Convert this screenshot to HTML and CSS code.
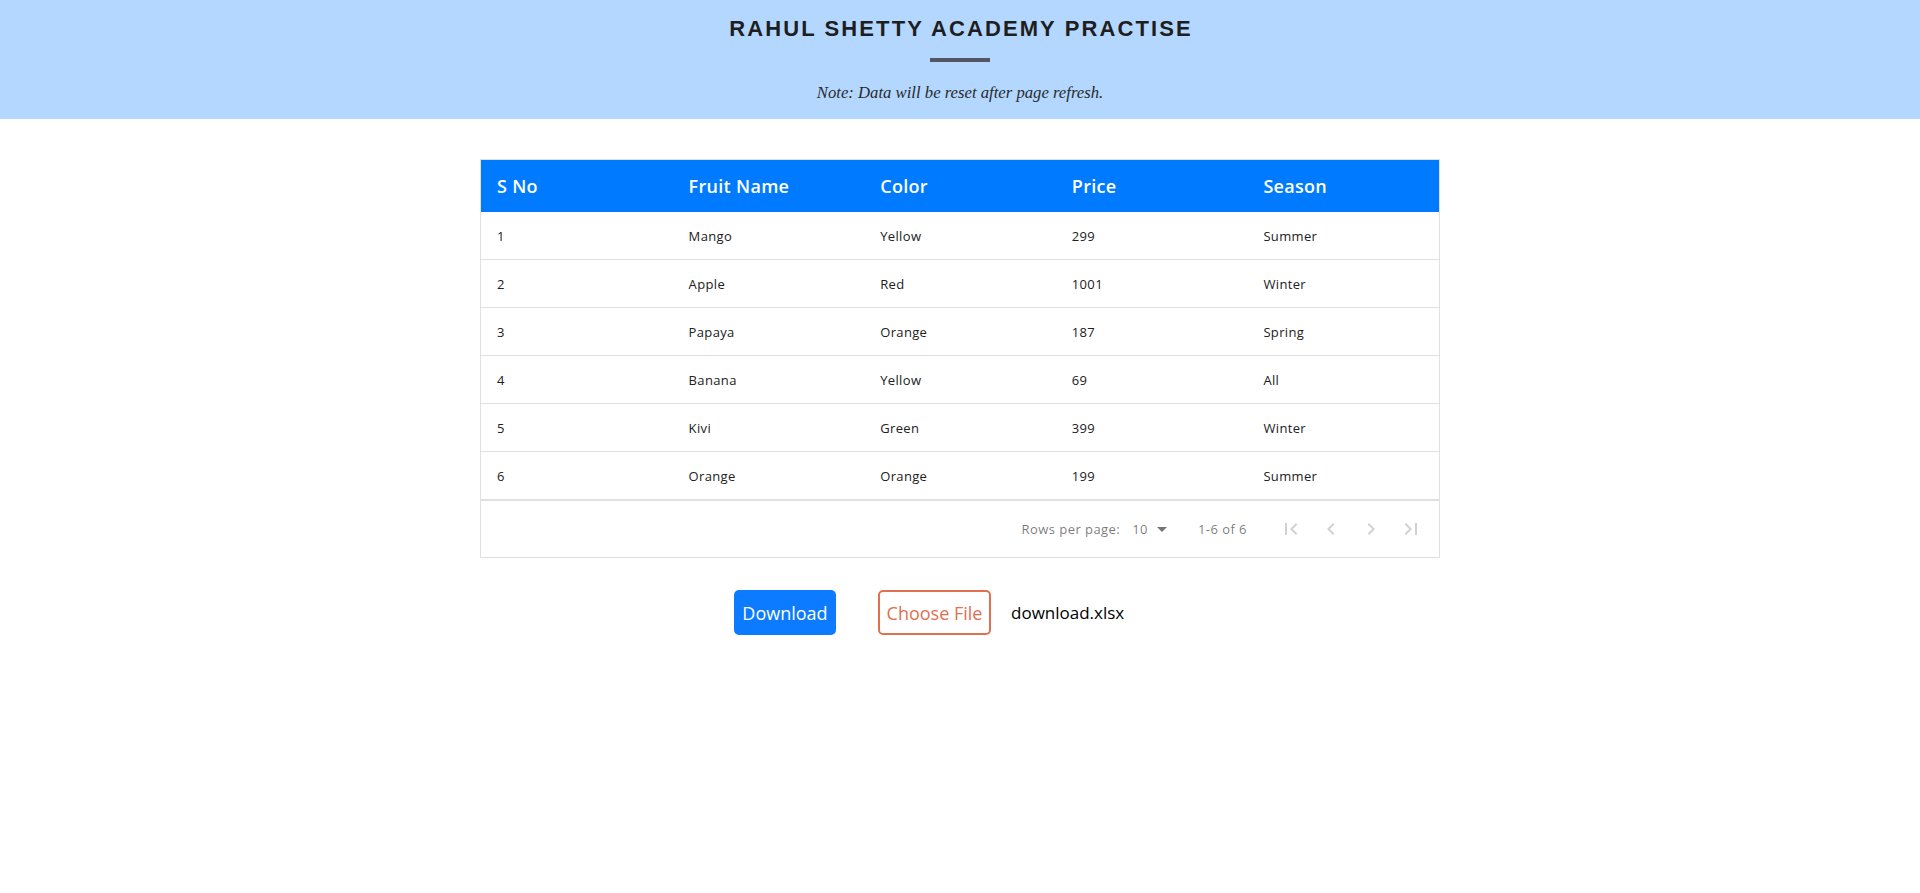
FILE: index.html
```html
<!DOCTYPE html>
<html lang="en">
<head>
<meta charset="utf-8">
<title>Rahul Shetty Academy Practise</title>
<link rel="stylesheet" href="styles.css">
</head>
<body>
<header class="banner">
  <h1 class="banner-title">RAHUL SHETTY ACADEMY PRACTISE</h1>
  <div class="banner-bar"></div>
  <p class="banner-note">Note: Data will be reset after page refresh.</p>
</header>

<main class="content">
  <div class="table">
    <div class="row head">
      <div class="cell">S No</div>
      <div class="cell">Fruit Name</div>
      <div class="cell">Color</div>
      <div class="cell">Price</div>
      <div class="cell">Season</div>
    </div>
    <div class="row">
      <div class="cell">1</div><div class="cell">Mango</div><div class="cell">Yellow</div><div class="cell">299</div><div class="cell">Summer</div>
    </div>
    <div class="row">
      <div class="cell">2</div><div class="cell">Apple</div><div class="cell">Red</div><div class="cell">1001</div><div class="cell">Winter</div>
    </div>
    <div class="row">
      <div class="cell">3</div><div class="cell">Papaya</div><div class="cell">Orange</div><div class="cell">187</div><div class="cell">Spring</div>
    </div>
    <div class="row">
      <div class="cell">4</div><div class="cell">Banana</div><div class="cell">Yellow</div><div class="cell">69</div><div class="cell">All</div>
    </div>
    <div class="row">
      <div class="cell">5</div><div class="cell">Kivi</div><div class="cell">Green</div><div class="cell">399</div><div class="cell">Winter</div>
    </div>
    <div class="row last">
      <div class="cell">6</div><div class="cell">Orange</div><div class="cell">Orange</div><div class="cell">199</div><div class="cell">Summer</div>
    </div>
    <div class="pager">
      <span class="pager-label">Rows per page:</span>
      <span class="pager-select">10
        <svg class="drop" viewBox="0 0 24 24" width="24" height="24"><path d="M7 10l5 5 5-5z"/></svg>
      </span>
      <span class="pager-range">1-6 of 6</span>
      <span class="pager-btn"><svg viewBox="0 0 24 24" width="24" height="24"><path d="M18.41 16.59L13.82 12l4.59-4.59L17 6l-6 6 6 6zM6 6h2v12H6z"/></svg></span>
      <span class="pager-btn"><svg viewBox="0 0 24 24" width="24" height="24"><path d="M15.41 7.41L14 6l-6 6 6 6 1.41-1.41L10.83 12z"/></svg></span>
      <span class="pager-btn"><svg viewBox="0 0 24 24" width="24" height="24"><path d="M10 6L8.59 7.41 13.17 12l-4.58 4.59L10 18l6-6z"/></svg></span>
      <span class="pager-btn"><svg viewBox="0 0 24 24" width="24" height="24"><path d="M5.59 7.41L10.18 12l-4.59 4.59L7 18l6-6-6-6zM16 6h2v12h-2z"/></svg></span>
    </div>
  </div>

  <div class="actions">
    <button class="btn-download" type="button">Download</button>
    <div class="file-input">
      <span class="btn-choose">Choose File</span>
      <span class="file-name">download.xlsx</span>
    </div>
  </div>
</main>
</body>
</html>
```

FILE: styles.css
```css
* { box-sizing: border-box; }

body {
  margin: 0;
  background: #ffffff;
  font-family: "Open Sans", "Noto Sans", sans-serif;
}

.banner {
  background: #b3d7ff;
  height: 119px;
  padding-top: 16px;
  display: flex;
  flex-direction: column;
  align-items: center;
}

.banner-title {
  margin: 0;
  font-family: "Liberation Sans", Arial, sans-serif;
  font-weight: 700;
  font-size: 22px;
  line-height: 25px;
  letter-spacing: 2.1px;
  color: #1e1e1e;
  padding-left: 2px;
}

.banner-bar {
  width: 60px;
  height: 4px;
  background: #565662;
  margin-top: 17px;
}

.banner-note {
  margin: 21px 0 0;
  font-family: "Liberation Serif", "Times New Roman", serif;
  font-style: italic;
  font-size: 16.7px;
  line-height: 19px;
  color: #2a2a2a;
}

.content {
  padding-top: 40px;
}

.table {
  width: 960px;
  margin: 0 auto;
  border: 1px solid #e0e0e0;
}

.row {
  display: grid;
  grid-template-columns: repeat(5, 1fr);
  height: 48px;
  border-bottom: 1px solid #e0e0e0;
  align-items: center;
  font-size: 13px;
  letter-spacing: 0.35px;
  color: #212121;
}

.row.head {
  height: 52px;
  background: #007bff;
  color: #ffffff;
  font-size: 18px;
  font-weight: 600;
  letter-spacing: 0.3px;
  border-bottom: none;
}

.row.last {
  border-bottom-width: 2px;
  height: 49px;
}

.cell {
  padding-left: 16px;
}

.pager {
  height: 56px;
  display: flex;
  align-items: center;
  justify-content: flex-end;
  padding-right: 8px;
  font-size: 13px;
  letter-spacing: 0.45px;
  color: rgba(0, 0, 0, 0.54);
}

.pager-label {
  margin-right: 12px;
}

.pager-select {
  display: flex;
  align-items: center;
  gap: 2px;
}

.drop {
  fill: rgba(0, 0, 0, 0.54);
}

.pager-range {
  margin: 0 24px;
}

.pager-btn {
  width: 40px;
  height: 40px;
  display: flex;
  align-items: center;
  justify-content: center;
}

.pager-btn svg {
  fill: rgba(0, 0, 0, 0.18);
}

.actions {
  display: flex;
  justify-content: center;
  align-items: center;
  margin-top: 32px;
}

.btn-download {
  width: 102px;
  height: 45px;
  border: none;
  border-radius: 5px;
  background: #0d7bff;
  color: #ffffff;
  font-family: "Open Sans", "Noto Sans", sans-serif;
  font-size: 18px;
  padding: 0;
}

.file-input {
  width: 308px;
  margin-left: 42px;
  display: flex;
  align-items: center;
}

.btn-choose {
  width: 113px;
  height: 45px;
  border: 2px solid #e0704f;
  border-radius: 5px;
  color: #e0704f;
  font-size: 18px;
  display: flex;
  align-items: center;
  justify-content: center;
}

.file-name {
  margin-left: 20px;
  font-size: 17px;
  color: #000000;
}
```
